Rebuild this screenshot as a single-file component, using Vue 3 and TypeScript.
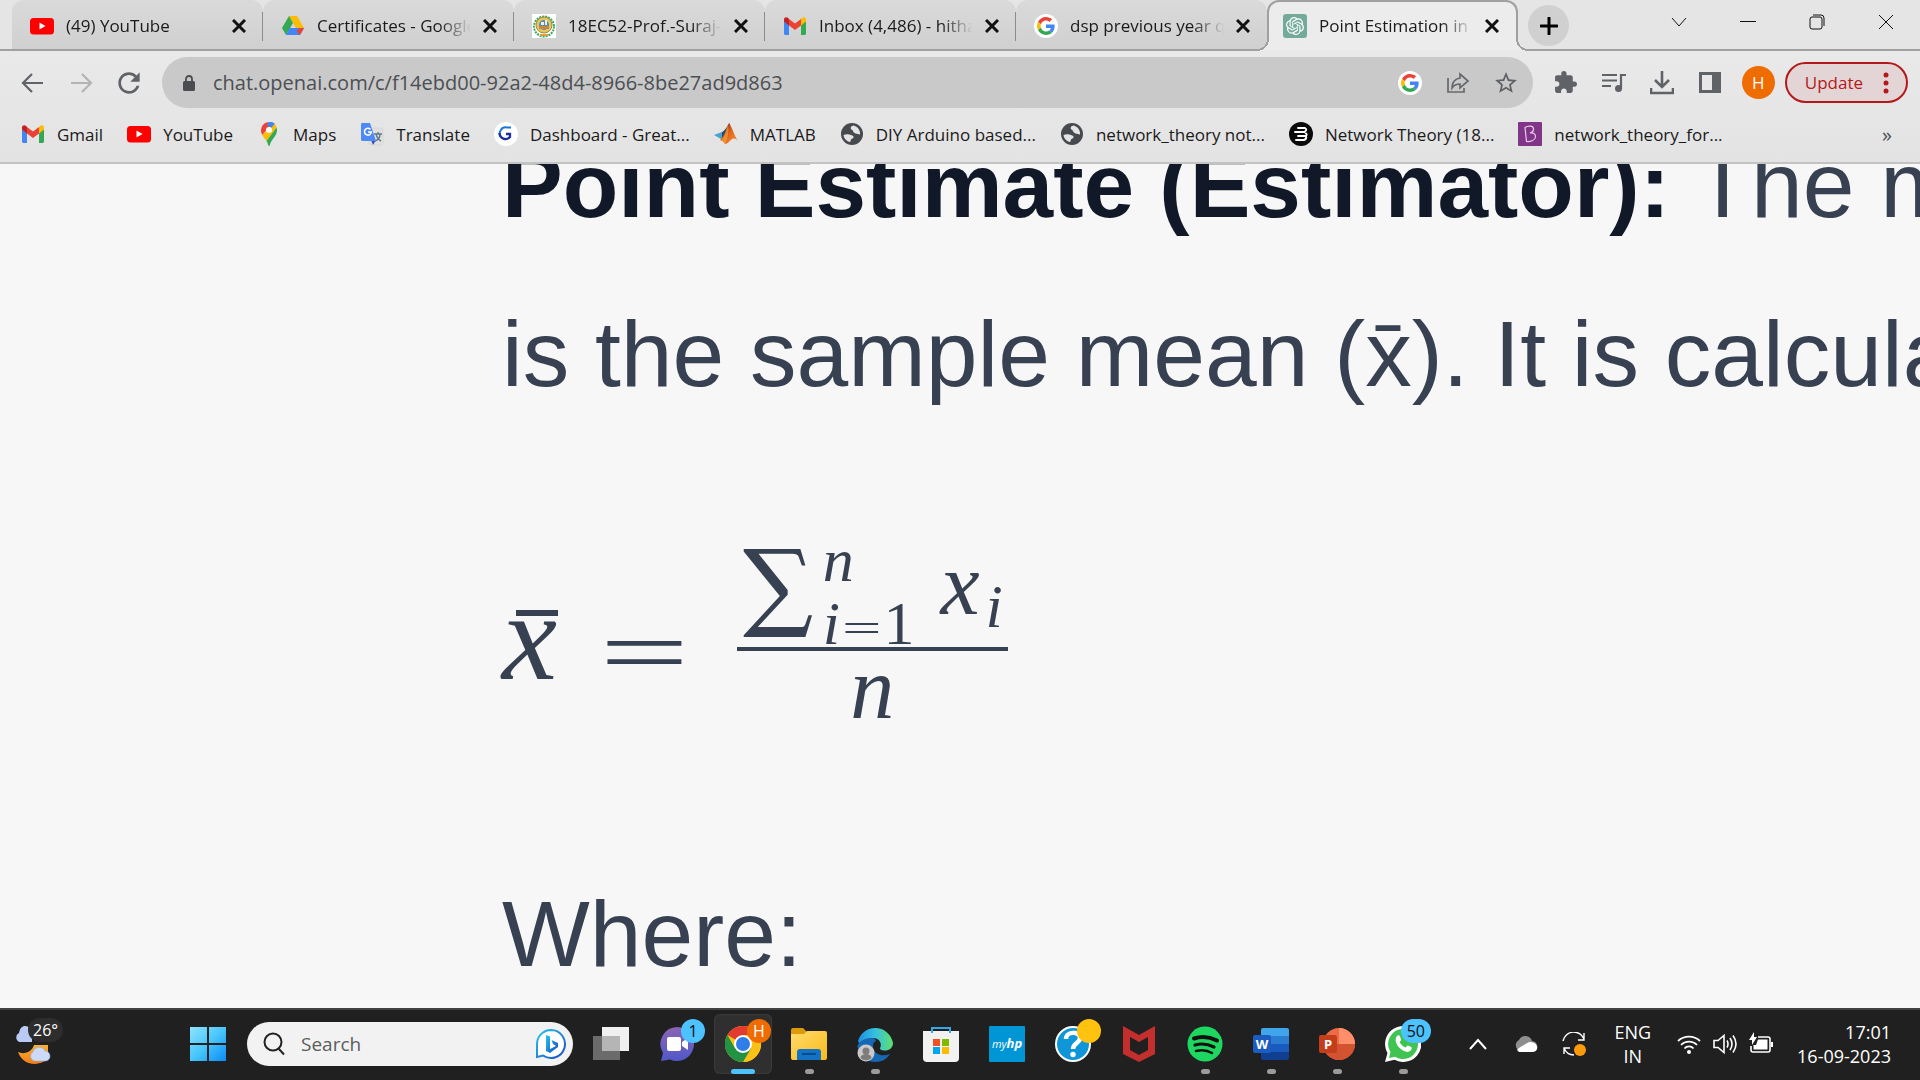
<script setup lang="ts">
interface Tab {
  icon: string
  title: string
  active?: boolean
}

interface Bookmark {
  icon: string
  label: string
}

interface PinnedApp {
  icon: string
  name: string
  letter?: string
  state?: 'open' | 'active'
  badge?: string
  badgeKind?: 'blue' | 'orange' | 'yellow'
}

const tabs: Tab[] = [
  { icon: 'youtube', title: '(49) YouTube' },
  { icon: 'drive', title: 'Certificates - Google' },
  { icon: 'crest', title: '18EC52-Prof.-Suraj-' },
  { icon: 'gmail', title: 'Inbox (4,486) - hitha' },
  { icon: 'google', title: 'dsp previous year qu' },
  { icon: 'openai', title: 'Point Estimation in S', active: true },
]

const bookmarks: Bookmark[] = [
  { icon: 'gmail', label: 'Gmail' },
  { icon: 'youtube', label: 'YouTube' },
  { icon: 'maps', label: 'Maps' },
  { icon: 'translate', label: 'Translate' },
  { icon: 'greatlearning', label: 'Dashboard - Great...' },
  { icon: 'matlab', label: 'MATLAB' },
  { icon: 'globe', label: 'DIY Arduino based...' },
  { icon: 'globe', label: 'network_theory not...' },
  { icon: 'stacked', label: 'Network Theory (18...' },
  { icon: 'byjus', label: 'network_theory_for...' },
]

const apps: PinnedApp[] = [
  { icon: 'taskview', name: 'Task view' },
  { icon: 'chat', name: 'Chat', badge: '1', badgeKind: 'blue' },
  { icon: 'chrome', name: 'Chrome', state: 'active', badge: 'H', badgeKind: 'orange' },
  { icon: 'explorer', name: 'File Explorer', state: 'open' },
  { icon: 'edge', name: 'Edge', state: 'open' },
  { icon: 'store', name: 'Microsoft Store' },
  { icon: 'myhp', name: 'myHP' },
  { icon: 'help', name: 'HP Support', badge: '', badgeKind: 'yellow' },
  { icon: 'mcafee', name: 'McAfee' },
  { icon: 'spotify', name: 'Spotify', state: 'open' },
  { icon: 'word', name: 'Word', letter: 'W', state: 'open' },
  { icon: 'powerpoint', name: 'PowerPoint', letter: 'P', state: 'open' },
  { icon: 'whatsapp', name: 'WhatsApp', state: 'open', badge: '50', badgeKind: 'blue' },
]

const url = 'chat.openai.com/c/f14ebd00-92a2-48d4-8966-8be27ad9d863'
</script>

<template>
  <div class="screen">
    <svg class="sprite" aria-hidden="true">
      <defs>
        <linearGradient id="g-win" x1="0" y1="0" x2="1" y2="1">
          <stop offset="0" stop-color="#8fe3ff" />
          <stop offset=".5" stop-color="#48c6fb" />
          <stop offset="1" stop-color="#0a8cf5" />
        </linearGradient>
        <linearGradient id="g-bing" x1="0" y1="0" x2="1" y2="1">
          <stop offset="0" stop-color="#22c7ee" />
          <stop offset="1" stop-color="#1b48c8" />
        </linearGradient>
        <linearGradient id="g-chat" x1="0" y1="0" x2="0" y2="1">
          <stop offset="0" stop-color="#8b63b4" />
          <stop offset="1" stop-color="#5059c9" />
        </linearGradient>
        <linearGradient id="g-folder" x1="0" y1="0" x2="1" y2="1">
          <stop offset="0" stop-color="#ffdc6b" />
          <stop offset="1" stop-color="#f9b91a" />
        </linearGradient>
        <linearGradient id="g-edge" x1="0" y1="0" x2="1" y2="0">
          <stop offset="0" stop-color="#1b8fe0" />
          <stop offset=".5" stop-color="#35c1e0" />
          <stop offset="1" stop-color="#5fe06a" />
        </linearGradient>
        <linearGradient id="g-moon" x1="0" y1="0" x2="0" y2="1">
          <stop offset="0" stop-color="#f9b233" />
          <stop offset="1" stop-color="#f07d1a" />
        </linearGradient>
        <linearGradient id="g-matlab" x1="0" y1="0" x2="1" y2="1">
          <stop offset="0" stop-color="#6d1f14" />
          <stop offset=".5" stop-color="#e2641c" />
          <stop offset="1" stop-color="#fb9a35" />
        </linearGradient>
      </defs>

      <symbol id="youtube" viewBox="0 0 24 24">
        <rect y="4" width="24" height="16.500" rx="3.500" fill="#f00" />
        <path d="M9.500 8.500v7l6-3.500z" fill="#fff" />
      </symbol>
      <symbol id="drive" viewBox="0 0 24 24">
        <path d="M8 2h8l7 12h-8z" fill="#fbbc04" />
        <path d="M8 2 1 14l4 7L12 9z" fill="#34a853" />
        <path d="M8.500 14H23l-4 7H5z" fill="#4285f4" />
        <path d="M19 14h4l-4 7-3.500-4z" fill="#ea4335" />
      </symbol>
      <symbol id="crest" viewBox="0 0 24 24">
        <path d="M0 0h24v24H0z" fill="#fff" />
        <circle cx="12" cy="12.500" r="10" fill="none" stroke="#3ba566" stroke-width="2" stroke-dasharray="2 1" />
        <circle cx="12" cy="11" r="8" fill="#e3c765" stroke="#a58a2e" />
        <circle cx="12" cy="11" r="5" fill="#5c8aa8" />
        <path d="M7 12h10v3H7z" fill="#c98545" />
        <path d="M9 8h3v3H9zM13 6h2v5h-2z" fill="#eee" />
        <path d="M8 20h8v2H8z" fill="#d9a23c" />
      </symbol>
      <symbol id="gmail" viewBox="0 0 24 24">
        <path d="M1 6v13.500c0 .8.700 1.500 1.500 1.500H6V10z" fill="#4285f4" />
        <path d="M18 21h3.500c.8 0 1.500-.7 1.500-1.500V6l-5 4z" fill="#34a853" />
        <path d="M18 5v6.500l5-4V5.500c0-2-2.200-3-3.800-1.700z" fill="#fbbc04" />
        <path d="M6 11.500V5l6 4.500L18 5v6.500L12 16z" fill="#ea4335" />
        <path d="M1 5.500v2l5 4V5L4.800 3.800C3.200 2.500 1 3.500 1 5.500z" fill="#c5221f" />
      </symbol>
      <symbol id="google" viewBox="0 0 24 24">
        <circle cx="12" cy="12" r="12" fill="#fff" />
        <g transform="translate(3 3) scale(.375)">
          <path fill="#EA4335" d="M24 9.500c3.540 0 6.710 1.220 9.210 3.600l6.850-6.850C35.900 2.380 30.470 0 24 0 14.620 0 6.510 5.380 2.560 13.220l7.980 6.190C12.430 13.720 17.740 9.500 24 9.500z" />
          <path fill="#4285F4" d="M46.980 24.550c0-1.570-.15-3.090-.38-4.550H24v9.020h12.940c-.58 2.960-2.260 5.480-4.780 7.180l7.730 6c4.510-4.180 7.090-10.360 7.090-17.650z" />
          <path fill="#FBBC05" d="M10.530 28.590c-.48-1.450-.76-2.990-.76-4.590s.27-3.140.76-4.590l-7.980-6.190C.92 16.460 0 20.120 0 24c0 3.880.92 7.540 2.560 10.780l7.970-6.190z" />
          <path fill="#34A853" d="M24 48c6.480 0 11.930-2.130 15.890-5.810l-7.730-6c-2.150 1.450-4.920 2.300-8.160 2.300-6.260 0-11.570-4.220-13.470-9.910l-7.980 6.190C6.510 42.620 14.620 48 24 48z" />
        </g>
      </symbol>
      <symbol id="openai" viewBox="0 0 24 24">
        <rect width="24" height="24" rx="3" fill="#74aa9c" />
        <g transform="translate(3 3) scale(.75)">
          <path fill="#fff" d="M22.2819 9.8211a5.9847 5.9847 0 0 0-.5157-4.9108 6.0462 6.0462 0 0 0-6.5098-2.9A6.0651 6.0651 0 0 0 4.9807 4.1818a5.9847 5.9847 0 0 0-3.9977 2.9 6.0462 6.0462 0 0 0 .7427 7.0966 5.98 5.98 0 0 0 .511 4.9107 6.051 6.051 0 0 0 6.5146 2.9001A5.9847 5.9847 0 0 0 13.2599 24a6.0557 6.0557 0 0 0 5.7718-4.2058 5.9894 5.9894 0 0 0 3.9977-2.9001 6.0557 6.0557 0 0 0-.7475-7.0729zm-9.022 12.6081a4.4755 4.4755 0 0 1-2.8764-1.0408l.1419-.0804 4.7783-2.7582a.7948.7948 0 0 0 .3927-.6813v-6.7369l2.02 1.1686a.071.071 0 0 1 .038.052v5.5826a4.504 4.504 0 0 1-4.4945 4.4944zm-9.6607-4.1254a4.4708 4.4708 0 0 1-.5346-3.0137l.142.0852 4.783 2.7582a.7712.7712 0 0 0 .7806 0l5.8428-3.3685v2.3324a.0804.0804 0 0 1-.0332.0615L9.74 19.9502a4.4992 4.4992 0 0 1-6.1408-1.6464zM2.3408 7.8956a4.485 4.485 0 0 1 2.3655-1.9728V11.6a.7664.7664 0 0 0 .3879.6765l5.8144 3.3543-2.0201 1.1685a.0757.0757 0 0 1-.071 0l-4.8303-2.7865A4.504 4.504 0 0 1 2.3408 7.872zm16.5963 3.8558L13.1038 8.364 15.1192 7.2a.0757.0757 0 0 1 .071 0l4.8303 2.7913a4.4944 4.4944 0 0 1-.6765 8.1042v-5.6772a.79.79 0 0 0-.407-.667zm2.0107-3.0231l-.142-.0852-4.7735-2.7818a.7759.7759 0 0 0-.7854 0L9.409 9.2297V6.8974a.0662.0662 0 0 1 .0284-.0615l4.8303-2.7866a4.4992 4.4992 0 0 1 6.6802 4.66zM8.3065 12.863l-2.02-1.1638a.0804.0804 0 0 1-.038-.0567V6.0742a4.4992 4.4992 0 0 1 7.3757-3.4537l-.142.0805L8.704 5.459a.7948.7948 0 0 0-.3927.6813zm1.0976-2.3654l2.602-1.4998 2.6069 1.4998v2.9994l-2.5974 1.4997-2.6067-1.4997Z" />
        </g>
      </symbol>
      <symbol id="maps" viewBox="0 0 24 24">
        <path d="M12 0a8 8 0 0 0-6.200 2.900L9 6.600z" fill="#ea4335" />
        <path d="M12 0 9 6.600 12 5l5.700-3.200A8 8 0 0 0 12 0z" fill="#4285f4" />
        <path d="M5.800 2.900A8 8 0 0 0 4 8c0 2 .5 3.500 1.300 5L14 3z" fill="#ea4335" />
        <path d="M5.300 13c1 2 2.700 4 4.200 6L19.500 5.500a8 8 0 0 0-1.800-3.700z" fill="#fbbc04" />
        <path d="M9.500 19c.9 1.300 1.500 3 1.700 4.200.2.900 1.400.9 1.600 0 .7-3 2.200-5 4.200-7.700 1.800-2.300 3-4.500 3-7.500a8 8 0 0 0-.5-2.500z" fill="#34a853" />
        <path d="M12 0a8 8 0 0 1 5.700 1.800L14 6l-4-3z" fill="#4285f4" />
        <circle cx="12" cy="8" r="3" fill="#fff" />
      </symbol>
      <symbol id="translate" viewBox="0 0 24 24">
        <rect x="9" y="6" width="14" height="17" rx="1.500" fill="#e0e0e0" stroke="#cfcfcf" stroke-width=".5" />
        <path d="M14 12h8M18 10v2M16 12c1 4 3 6 5 7M20 12c0 3-2 6-5 7" stroke="#607988" stroke-width="1.400" fill="none" />
        <path d="M11 18h5l-3 5z" fill="#3a4fb3" />
        <path d="M1.500 1H10l6 18H2.500A1.500 1.500 0 0 1 1 17.500v-15z" fill="#4e8af4" />
        <path d="M10.500 7.500A3.400 3.400 0 1 0 11.300 10H8" stroke="#fff" stroke-width="1.500" fill="none" />
      </symbol>
      <symbol id="greatlearning" viewBox="0 0 24 24">
        <circle cx="12" cy="12" r="12" fill="#fff" />
        <path d="M17 5.500h-4A6 6 0 0 0 7 15" stroke="#1a73d8" stroke-width="2" fill="none" />
        <path d="M5.500 11a6 6 0 0 0 10.500 4v-3h-4" stroke="#1c2f9c" stroke-width="2.300" fill="none" />
      </symbol>
      <symbol id="matlab" viewBox="0 0 24 24">
        <path d="M0 13 8 10l4 3-5 4z" fill="#4aa3cf" />
        <path d="M8 10c3-1 5-6 8-9l-3 12-5 3.500z" fill="#2b4c6e" />
        <path d="M15 1c3 4 5 12 9 18-3-3-5-3-7-1-2 1-3 4-6 4-1-2-2-3-5-4 5-4 6-12 9-17z" fill="url(#g-matlab)" />
        <path d="M14 3c1 6 0 13-3 19-1-2-2-3-4-4 4-3 5-10 7-15z" fill="#f9b43a" opacity=".55" />
      </symbol>
      <symbol id="globe" viewBox="0 0 24 24">
        <circle cx="12" cy="12" r="11" fill="#46494d" />
        <path d="M13.500 3.500c-2 .3-3 1.500-2.800 3 .3 1.500 2 1.200 2.300 2.500.2 1.500 1.500 1.700 2.500 2.500l4.500 1C20.500 8 17.500 4.500 13.500 3.500zM3.500 13c2-1 4.500-1 5.500-.5 1.500.5 4 .5 4.500 2s-1 2-2 2.500-.5 2-1.500 3C7 19.500 4 17 3.500 13z" fill="#e4e4e4" />
      </symbol>
      <symbol id="stacked" viewBox="0 0 24 24">
        <circle cx="12" cy="12" r="12" fill="#0a0a0a" />
        <path d="M9 6h7M6 10h9M9 14h8M7 18h8M16 6q3 2-1 4 4 2 2 4 1 3-2 4" stroke="#fff" stroke-width="1.900" fill="none" stroke-linecap="round" />
      </symbol>
      <symbol id="byjus" viewBox="0 0 24 24">
        <rect width="24" height="24" rx="1" fill="#813588" />
        <path d="M7 5.500c3-2 8-2 8.500 1 .3 2.500-2 4-3.500 4.500 3.500-.5 6 1 5.500 4-.5 3.500-5 5-9 4.500L7 5.500z" stroke="#e7cbe9" stroke-width="1.200" fill="none" />
      </symbol>

      <symbol id="taskview" viewBox="0 0 36 36">
        <path d="M9 1h27v24H9z" fill="#f0f0f0" />
        <path d="M0 10h27v24H0z" fill="#6b6b6b" />
        <path d="M9 10h18v15H9z" fill="#b5b5b5" />
      </symbol>
      <symbol id="chat" viewBox="0 0 36 36">
        <path d="M18 1a17 17 0 1 1-7 32.500L2 35l2-8A17 17 0 0 1 18 1z" fill="url(#g-chat)" />
        <rect x="8" y="11" width="14" height="14" rx="2" fill="#fff" />
        <path d="m23 16 6-4v12l-6-4z" fill="#fff" />
      </symbol>
      <symbol id="chrome" viewBox="0 0 36 36">
        <circle cx="18" cy="18" r="18" fill="#fbc116" />
        <path d="M18 18 2.400 9A18 18 0 0 1 33.600 9H18z" fill="#e33b2e" />
        <path d="M18 9h15.600A18 18 0 0 1 18 36l8-13z" fill="#fbc116" />
        <path d="M2.400 9A18 18 0 0 0 18 36l8-13.500L10.200 22.500z" fill="#229342" />
        <circle cx="18" cy="18" r="9" fill="#fff" />
        <circle cx="18" cy="18" r="7" fill="#2f7de8" />
      </symbol>
      <symbol id="explorer" viewBox="0 0 36 36">
        <path d="M0 4a2 2 0 0 1 2-2h10l4 4v6H0z" fill="#dd9a0c" />
        <path d="M0 8h13l3-3h18a2 2 0 0 1 2 2v25a2 2 0 0 1-2 2H2a2 2 0 0 1-2-2z" fill="url(#g-folder)" />
        <path d="M6 34V26a3 3 0 0 1 3-3h18a3 3 0 0 1 3 3v8z" fill="#1372c6" />
        <path d="M11 28h14" stroke="#0a4a8c" stroke-width="2" />
      </symbol>
      <symbol id="edge" viewBox="0 0 36 36">
        <path d="M1 15A18 18 0 0 1 36 17c0 5-4 7.500-8 7.500-4 0-6-1.500-4.500-3.500C25 17 22 12 16 12 9 12 5 16 5 22z" fill="url(#g-edge)" />
        <path d="M16 12C7 11 0 17 .500 21 2 31 10 36 18 36c7 0 12-3 15-8-7 3-17 1-17-8 0-3 1-4 3-5-1-2-2-3-3-3z" fill="#1667b4" />
        <circle cx="9" cy="27" r="8.500" fill="#c9c9c9" />
        <circle cx="9" cy="25" r="3.500" fill="#7f7b78" />
        <path d="M3.500 32a5.500 4 0 0 1 11 0 8 8 0 0 1-11 0z" fill="#7f7b78" />
      </symbol>
      <symbol id="store" viewBox="0 0 36 36">
        <path d="M0 5h36v27a4 4 0 0 1-4 4H4a4 4 0 0 1-4-4z" fill="#f2f2f2" />
        <path d="M9 7V2h18v5" stroke="#35a7e8" stroke-width="2" fill="none" />
        <path d="M10 13h7v7h-7z" fill="#f25022" />
        <path d="M19 13h7v7h-7z" fill="#7fba00" />
        <path d="M10 21h7v7h-7z" fill="#00a4ef" />
        <path d="M19 21h7v7h-7z" fill="#ffb900" />
      </symbol>
      <symbol id="myhp" viewBox="0 0 36 36">
        <rect width="36" height="36" rx="1" fill="#0096d6" />
      </symbol>
      <symbol id="help" viewBox="0 0 36 36">
        <circle cx="18" cy="18" r="17" fill="#0f96d8" stroke="#fff" stroke-width="2" />
        <path d="M11 13c0-8 14-8 14-1 0 5-7 5-7 11" stroke="#fff" stroke-width="4.500" fill="none" />
        <circle cx="18" cy="28.500" r="2.700" fill="#fff" />
      </symbol>
      <symbol id="mcafee" viewBox="0 0 36 36">
        <path d="M2 0 18 9 34 0v28l-16 8-16-8zM9 11v13l9 5 9-5V11l-9 5z" fill="#c22f2d" fill-rule="evenodd" />
      </symbol>
      <symbol id="spotify" viewBox="0 0 36 36">
        <circle cx="18" cy="18" r="17.500" fill="#1ed760" />
        <path d="M7 12.500c8-2.500 16-1.500 23 2" stroke="#111" stroke-width="4" fill="none" stroke-linecap="round" />
        <path d="M8 19c7-2 13-1 19 2" stroke="#111" stroke-width="3.200" fill="none" stroke-linecap="round" />
        <path d="M9 25c6-1.500 11-1 16 2" stroke="#111" stroke-width="2.600" fill="none" stroke-linecap="round" />
      </symbol>
      <symbol id="word" viewBox="0 0 36 36">
        <path d="M10 2h24a2 2 0 0 1 2 2v6H8V4a2 2 0 0 1 2-2z" fill="#41a5ee" />
        <path d="M8 10h28v8H8z" fill="#2b7cd3" />
        <path d="M8 18h28v8H8z" fill="#185abd" />
        <path d="M8 26h28v6a2 2 0 0 1-2 2H10a2 2 0 0 1-2-2z" fill="#103f91" />
        <rect y="9" width="18" height="18" rx="2" fill="#1c5cc0" />
      </symbol>
      <symbol id="powerpoint" viewBox="0 0 36 36">
        <circle cx="20" cy="18" r="16" fill="#ed6c47" />
        <path d="M20 2a16 16 0 0 1 16 16H20z" fill="#ff8f6b" />
        <path d="M4 18h32a16 16 0 0 1-32 0z" fill="#d35230" />
        <rect y="9" width="18" height="18" rx="2" fill="#c43e1c" />
      </symbol>
      <symbol id="whatsapp" viewBox="0 0 36 36">
        <path d="M18 0a18 18 0 1 1-8.500 33.700L0 36l2.500-9A18 18 0 0 1 18 0z" fill="#fff" />
        <path d="M18 3a15 15 0 1 1-8 27.700L4 32l1.500-6A15 15 0 0 1 18 3z" fill="#3fc351" />
        <path d="M12 10c1-1 2.500-1 3 .5l1.200 3c.2.8-1.700 2.300-1.500 2.800 1 2.200 3.300 4.300 5.600 5.200.7.200 1.900-2.200 2.700-1.900l3.200 1.500c1 .6.600 2.500-.5 3.500-3 2.700-7.500.8-11-2.500S9 13 12 10z" fill="#fff" />
      </symbol>
    </svg>

    <header class="browser">
      <nav class="tab-strip" aria-label="Tabs">
        <div v-for="tab in tabs" :key="tab.title" class="tab" :class="{ active: tab.active }">
          <svg class="favicon"><use :href="'#' + tab.icon" /></svg>
          <a class="tab-title" href="#">{{ tab.title }}</a>
          <button class="tab-close" type="button" aria-label="Close tab">
            <svg viewBox="0 0 14 14"><path d="m1 1 12 12M13 1 1 13" stroke="#111" stroke-width="3" /></svg>
          </button>
        </div>
        <button class="new-tab" type="button" aria-label="New tab">
          <svg viewBox="0 0 18 18"><path d="M9 1v16M1 9h16" stroke="#000" stroke-width="3" stroke-linecap="round" /></svg>
        </button>
        <div class="window-controls">
          <button type="button" aria-label="Search tabs">
            <svg viewBox="0 0 16 16"><path d="m1 4 7 8 7-8" /></svg>
          </button>
          <button type="button" aria-label="Minimize">
            <svg viewBox="0 0 16 16"><path d="M0 7.500h16" /></svg>
          </button>
          <button type="button" aria-label="Restore">
            <svg viewBox="0 0 16 16"><rect x="1" y="3" width="12" height="12" rx="2" /><path d="M4 1h8a3 3 0 0 1 3 3v8" /></svg>
          </button>
          <button type="button" aria-label="Close window">
            <svg viewBox="0 0 16 16"><path d="m1 1 14 14M15 1 1 15" /></svg>
          </button>
        </div>
      </nav>

      <div class="toolbar">
        <button class="tool" type="button" aria-label="Back">
          <svg viewBox="0 0 24 24"><path d="M22 12H3M11 3l-9 9 9 9" stroke="#5f6368" stroke-width="2.200" fill="none" /></svg>
        </button>
        <button class="tool" type="button" aria-label="Forward">
          <svg viewBox="0 0 24 24"><path d="M2 12h19M13 3l9 9-9 9" stroke="#b3b4b6" stroke-width="2.200" fill="none" /></svg>
        </button>
        <button class="tool" type="button" aria-label="Reload">
          <svg viewBox="3 3 18 18"><path fill="#5f6368" d="M17.650 6.350C16.200 4.900 14.210 4 12 4c-4.420 0-7.990 3.580-7.990 8s3.570 8 7.990 8c3.730 0 6.840-2.550 7.730-6h-2.080c-.82 2.330-3.040 4-5.650 4-3.310 0-6-2.690-6-6s2.690-6 6-6c1.660 0 3.140.69 4.220 1.780L13 11h7V4l-2.350 2.350z" /></svg>
        </button>
        <div class="omnibox">
          <svg class="lock" viewBox="0 0 14 18"><rect x="1" y="7" width="12" height="10" rx="1.500" fill="#4a4d51" /><path d="M4 8V5a3 3 0 0 1 6 0v3" fill="none" stroke="#4a4d51" stroke-width="1.800" /></svg>
          <input class="url" type="text" :value="url" aria-label="Address" />
          <button class="tool" type="button" aria-label="Google Lens"><svg><use href="#google" /></svg></button>
          <button class="tool" type="button" aria-label="Share">
            <svg viewBox="0 0 24 24"><path d="M2 7v14h16v-4M14 3l8 7-8 7v-4c-4 0-6 1-8 4 0-6 3-9 8-10z" stroke="#65686c" stroke-width="1.700" fill="none" /></svg>
          </button>
          <button class="tool" type="button" aria-label="Bookmark">
            <svg viewBox="1 1 22 22"><path fill="#5f6368" d="M22 9.240l-7.190-.62L12 2 9.190 8.630 2 9.240l5.460 4.730L5.820 21 12 17.270 18.180 21l-1.630-7.030L22 9.240zM12 15.400l-3.760 2.270 1-4.280-3.320-2.880 4.380-.38L12 6.100l1.710 4.040 4.380.38-3.320 2.880 1 4.280L12 15.400z" /></svg>
          </button>
        </div>
        <div class="extensions">
          <button class="tool" type="button" aria-label="Extensions">
            <svg viewBox="1 1 23 23"><path fill="#5f6368" d="M20.500 11H19V7c0-1.100-.9-2-2-2h-4V3.500a2.500 2.500 0 0 0-5 0V5H4c-1.100 0-2 .9-2 2v3.800h1.500c1.500 0 2.700 1.200 2.700 2.700S5 16.200 3.500 16.200H2V20c0 1.100.9 2 2 2h3.800v-1.500c0-1.500 1.200-2.700 2.700-2.700s2.700 1.200 2.700 2.700V22H17c1.100 0 2-.9 2-2v-4h1.500a2.500 2.500 0 0 0 0-5z" /></svg>
          </button>
          <button class="tool" type="button" aria-label="Media controls">
            <svg viewBox="0 0 24 24"><path d="M0 4h15M0 9.500h15M0 15h9" stroke="#5f6368" stroke-width="2" /><path d="M18 4h6M19 3v15" stroke="#5f6368" stroke-width="2.200" /><circle cx="16.500" cy="17.500" r="3.500" fill="#5f6368" /></svg>
          </button>
          <button class="tool" type="button" aria-label="Downloads">
            <svg viewBox="0 0 24 24"><path d="M12 0v15M5 9l7 7 7-7M1 17v5h22v-5" stroke="#5f6368" stroke-width="2.600" fill="none" /></svg>
          </button>
          <button class="tool" type="button" aria-label="Side panel">
            <svg viewBox="0 0 24 24"><path d="M1 1h22v21H1zM4 4v15h10V4z" fill="#5f6368" fill-rule="evenodd" /></svg>
          </button>
          <button class="avatar" type="button" aria-label="Profile">H</button>
          <button class="update" type="button">
            Update
            <svg viewBox="0 0 6 22"><circle cx="3" cy="3" r="2.500" /><circle cx="3" cy="11" r="2.500" /><circle cx="3" cy="19" r="2.500" /></svg>
          </button>
        </div>
      </div>

      <nav class="bookmarks" aria-label="Bookmarks">
        <a v-for="mark in bookmarks" :key="mark.label" class="bookmark" href="#">
          <svg class="favicon"><use :href="'#' + mark.icon" /></svg>
          <span>{{ mark.label }}</span>
        </a>
        <button class="more" type="button" aria-label="More bookmarks">»</button>
      </nav>
    </header>

    <main class="page">
      <p class="prose">
        <strong>Point Estimate (Estimator):</strong> The most<br />is the sample mean (x̄). It is calculated
      </p>
      <div class="formula">
        <i class="mean">x</i>
        <span class="equals">=</span>
        <div class="fraction">
          <div class="numerator">
            <span class="sum">∑</span>
            <div class="limits">
              <i>n</i>
              <span><i>i</i><span class="small-equals">=</span>1</span>
            </div>
            <i class="term">x</i>
            <i class="index">i</i>
          </div>
          <i class="denominator">n</i>
        </div>
      </div>
      <p class="prose">Where:</p>
    </main>

    <footer class="taskbar">
      <button class="weather" type="button" aria-label="Weather">
        <svg viewBox="0 0 48 52">
          <path d="M4 24a5 5 0 0 1 0-9c1-5 3-7 6-7 4 0 6 3 7 7v9z" fill="#b9cbf5" />
          <path d="M3 34c6 3 14 0 16-7h14v12c-3 8-24 12-30-5z" fill="url(#g-moon)" />
          <path d="M19 43a5 5 0 0 1-1-9c1-5 9-7 12-1 6 0 7 9 1 10z" fill="#ccd9f8" stroke="#8fa8e3" stroke-width=".5" />
        </svg>
        <span>26°</span>
      </button>

      <button class="start" type="button" aria-label="Start">
        <svg viewBox="0 0 36 36"><path d="M0 1h17v16H0zM19 1h17v16H19zM0 19h17v16H0zM19 19h17v16H19z" fill="url(#g-win)" /></svg>
      </button>
      <div class="search">
        <svg class="glass" viewBox="0 0 24 24"><circle cx="11" cy="10" r="8.500" /><path d="m16.500 16.500 5.500 6" /></svg>
        <input type="text" placeholder="Search" aria-label="Search" />
        <svg class="bing" viewBox="0 0 32 32">
          <path d="M16 2a14 14 0 1 1-8 25.500L2 29V16A14 14 0 0 1 16 2z" fill="#fff" stroke="url(#g-bing)" stroke-width="2" />
          <path d="m11 7 4 1.500V21l6-3-3-2-1.500-4L23 15v4L15 25l-4-2z" fill="url(#g-bing)" />
        </svg>
      </div>

      <button v-for="app in apps" :key="app.name" class="app" :class="app.state" type="button" :aria-label="app.name">
        <svg class="app-icon"><use :href="'#' + app.icon" /></svg>
        <span v-if="app.letter" class="letter">{{ app.letter }}</span>
        <span v-if="app.icon === 'myhp'" class="wordmark">my<b>hp</b></span>
        <span v-if="app.badgeKind" class="badge" :class="app.badgeKind">{{ app.badge }}</span>
      </button>

      <div class="tray">
        <button type="button" aria-label="Show hidden icons">
          <svg viewBox="0 0 24 24"><path d="m4 17 8-9 8 9" stroke="#fff" stroke-width="2" fill="none" /></svg>
        </button>
        <button type="button" aria-label="OneDrive">
          <svg viewBox="0 0 24 24"><path d="M6 19a6 6 0 0 1-1-11 7 7 0 0 1 13 1c7 1 7 10 1 10z" fill="#8e8e8e" /><path d="M3 18c2-3 9-6 12-8 9-1 11 9 4 10H5z" fill="#fff" /></svg>
        </button>
        <button type="button" aria-label="Update available">
          <svg viewBox="0 0 24 24"><path d="M1 9A11 11 0 0 1 22 7M22 1v7h-6M12 23A11 11 0 0 1 2 16M2 22v-6h6" stroke="#fff" stroke-width="1.400" fill="none" /><circle cx="18" cy="18" r="6" fill="#fb9b0b" /></svg>
        </button>
        <button class="language" type="button">ENG<br />IN</button>
        <button class="status" type="button" aria-label="Network, volume and battery">
          <svg viewBox="0 0 24 24"><path d="M1 9a16 16 0 0 1 22 0M4 13a11 11 0 0 1 16 0M7.500 16.500a6 6 0 0 1 9 0" stroke="#fff" stroke-width="1.800" fill="none" /><circle cx="12" cy="20" r="2" fill="#fff" /></svg>
          <svg viewBox="0 0 24 24"><path d="M1 8.500h4l6-5v17l-6-5H1zM14 8.500q2 3.500 0 7M17 6q4 6 0 12M20 3.500q6 8.500 0 17" stroke="#fff" stroke-width="1.600" fill="none" /></svg>
          <svg viewBox="0 0 24 24"><path d="M9 5h10a2 2 0 0 1 2 2v11a2 2 0 0 1-2 2H4a2 2 0 0 1-2-2v-4" stroke="#fff" stroke-width="1.600" fill="none" /><path d="M9 7.500h9.500v10H4.500V13H7zM22 10h2v5h-2zM5 0v5h3l-5 8V8H0z" fill="#fff" /></svg>
        </button>
        <button class="clock" type="button">17:01<br />16-09-2023</button>
      </div>
    </footer>
  </div>
</template>

<style>
body {
  background: #f7f7f7;
}
</style>

<style scoped>
.screen {
  display: flex;
  flex-direction: column;
  height: 100vh;
  overflow: hidden;
  font-family: "Open Sans", "Noto Sans", sans-serif;
  color: #1a1a1a;
}

.sprite {
  position: absolute;
  width: 0;
  height: 0;
}

svg {
  display: block;
  flex: none;
}

button {
  padding: 0;
  border: 0;
  background: none;
  font: inherit;
  color: inherit;
}

a {
  color: inherit;
  text-decoration: none;
}

.favicon {
  width: 24px;
  height: 24px;
}

/* Browser frame */
.browser {
  flex: none;
  height: 162px;
  border-bottom: 2px solid #c3c3c3;
  background: linear-gradient(#ececec, #e3e3e3);
}

.tab-strip {
  display: flex;
  height: 51px;
  padding-left: 12px;
  background: #e5e5e5;
  box-shadow: inset 0 -2px #a0a0a0;
}

.tab {
  display: flex;
  flex: 0 1 251px;
  align-items: center;
  gap: 12px;
  box-sizing: border-box;
  min-width: 0;
  height: 49px;
  padding: 2px 17px 0 18px;
  border-radius: 12px 12px 0 0;
  background:
    linear-gradient(#8c8c8c, #8c8c8c) right 12px / 1px 29px no-repeat,
    linear-gradient(#dadada, #d0d0d0);
  font-size: 17px;
}

.tab:nth-child(5) {
  background: linear-gradient(#dadada, #d0d0d0);
}

.tab.active {
  position: relative;
  height: 51px;
  padding: 0 17px 2px 14px;
  border: 2px solid #a0a0a0;
  border-bottom: 0;
  background: #ececec;
}

.tab.active::before,
.tab.active::after {
  content: "";
  position: absolute;
  bottom: 0;
  width: 12px;
  height: 12px;
}

.tab.active::before {
  right: 100%;
  background: radial-gradient(circle at 0 0, transparent 10px, #a0a0a0 10px 12px, #ececec 12px);
}

.tab.active::after {
  left: 100%;
  background: radial-gradient(circle at 100% 0, transparent 10px, #a0a0a0 10px 12px, #ececec 12px);
}

.tab-title {
  flex: 1;
  overflow: hidden;
  white-space: nowrap;
  mask-image: linear-gradient(90deg, #000 calc(100% - 32px), transparent);
}

.tab-close svg {
  width: 14px;
  height: 14px;
}

.new-tab {
  display: grid;
  place-items: center;
  width: 41px;
  height: 41px;
  margin: 5px 0 0 10px;
  border-radius: 50%;
  background: #d0d0d0;
}

.new-tab svg {
  width: 18px;
}

.window-controls {
  display: flex;
  margin-left: auto;
}

.window-controls button {
  display: grid;
  place-items: center;
  width: 69px;
  height: 44px;
}

.window-controls svg {
  width: 16px;
  height: 16px;
  fill: none;
  stroke: #111;
  stroke-width: 1;
}

.toolbar {
  display: flex;
  align-items: center;
  height: 63px;
  padding: 0 12px 0 9px;
}

.tool {
  display: grid;
  place-items: center;
  width: 48px;
  height: 48px;
}

.tool svg {
  width: 24px;
  height: 24px;
}

.omnibox {
  display: flex;
  flex: 1;
  align-items: center;
  height: 51px;
  margin-left: 9px;
  padding: 0 3px 0 20px;
  border-radius: 26px;
  background: #c9c9c9;
}

.lock {
  width: 14px;
  height: 18px;
}

.url {
  flex: 1;
  min-width: 0;
  margin-left: 17px;
  padding: 0;
  border: 0;
  outline: 0;
  background: none;
  font: inherit;
  font-size: 20px;
  color: #4c4f53;
}

.extensions {
  display: flex;
  align-items: center;
  margin-left: 9px;
}

.avatar {
  width: 33px;
  height: 33px;
  margin: 0 10px 0 8px;
  border-radius: 50%;
  background: #ef6c00;
  font-size: 17px;
  color: #fff;
}

.update {
  display: flex;
  align-items: center;
  gap: 20px;
  box-sizing: border-box;
  height: 41px;
  padding: 0 17px 0 18px;
  border: 2px solid #b3191b;
  border-radius: 21px;
  background: #e3d5d5;
  font-size: 17px;
  color: #b3191b;
}

.update svg {
  width: 6px;
  height: 22px;
  fill: #b3191b;
}

.bookmarks {
  display: flex;
  align-items: center;
  gap: 24px;
  height: 40px;
  padding: 0 28px 0 21px;
  font-size: 17px;
}

.bookmark {
  display: flex;
  align-items: center;
  gap: 12px;
  white-space: nowrap;
}

.more {
  margin-left: auto;
  font-size: 20px;
  color: #4c4f53;
}

/* Page */
.page {
  flex: 1;
  min-height: 0;
  overflow: hidden;
  padding-left: 502px;
  background: #f7f7f7;
  color: #374151;
}

.prose {
  margin: 0;
  font: 93px/168px "Liberation Sans", sans-serif;
  white-space: nowrap;
}

.prose:first-child {
  margin-top: -63px;
}

.prose strong {
  font-size: 91px;
  color: #111827;
}

.formula {
  display: flex;
  align-items: flex-start;
  height: 309px;
  margin-top: 103px;
  font-family: "Liberation Serif", serif;
  line-height: 1;
}

.mean {
  position: relative;
  margin-top: 35px;
  font-size: 124px;
}

.mean::before {
  content: "";
  position: absolute;
  top: 34px;
  left: 14px;
  width: 42px;
  height: 6px;
  background: #374151;
}

.equals,
.small-equals {
  font-family: "DejaVu Sans", sans-serif;
  font-weight: 200;
}

.equals {
  margin: 48px 0 0 38px;
  font-size: 118px;
}

.small-equals {
  font-size: 52px;
}

.fraction {
  display: flex;
  flex-direction: column;
  align-items: center;
  margin-left: 43px;
}

.numerator {
  display: flex;
  align-items: flex-start;
  box-sizing: border-box;
  height: 110px;
  padding-right: 5px;
  border-bottom: 4px solid #374151;
}

.sum {
  margin-top: 8px;
  font-family: "DejaVu Math TeX Gyre", "DejaVu Serif", serif;
  font-size: 84px;
}

.limits {
  display: flex;
  flex-direction: column;
  margin: -12px 26px 0 4px;
  font-size: 62px;
  line-height: 63px;
}

.term {
  font-size: 88px;
}

.index {
  margin: 34px 0 0 6px;
  font-size: 62px;
}

.denominator {
  font-size: 88px;
  line-height: 76px;
}

/* Taskbar */
.taskbar {
  display: flex;
  flex: none;
  align-items: center;
  box-sizing: border-box;
  height: 72px;
  padding-bottom: 2px;
  border-top: 2px solid #414141;
  background: #202020;
  color: #fff;
}

.weather {
  position: relative;
  width: 48px;
  margin: 0 127px 0 15px;
}

.weather svg {
  width: 48px;
  height: 52px;
}

.weather span {
  position: absolute;
  top: 0;
  left: 13px;
  padding: 2px 5px;
  border-radius: 12px;
  background: #2d2d2d;
  font-size: 16px;
  line-height: 20px;
}

.start svg {
  width: 36px;
  height: 36px;
}

.search {
  display: flex;
  align-items: center;
  box-sizing: border-box;
  width: 326px;
  height: 44px;
  margin: 0 5px 0 21px;
  padding: 0 6px 0 15px;
  border-radius: 22px;
  background: #f2f2f2;
}

.glass {
  width: 24px;
  height: 24px;
  fill: none;
  stroke: #222;
  stroke-width: 2;
}

.search input {
  flex: 1;
  min-width: 0;
  margin-left: 15px;
  padding: 0;
  border: 0;
  background: none;
  font: inherit;
  font-size: 19px;
}

.search input::placeholder {
  color: #5c5c5c;
  opacity: 1;
}

.bing {
  width: 32px;
  height: 32px;
}

.app {
  position: relative;
  display: grid;
  place-items: center;
  width: 58px;
  height: 60px;
  margin: 0 4px;
  border-radius: 6px;
}

.app-icon {
  width: 36px;
  height: 36px;
}

.app.active {
  background: #2f2f2f;
  box-shadow: inset 0 0 0 1px #3a3a3a;
}

.app.open::after,
.app.active::after {
  content: "";
  position: absolute;
  bottom: 0;
  left: 50%;
  width: 9px;
  height: 5px;
  margin-left: -4px;
  border-radius: 3px;
  background: #9b9b9b;
}

.app.active::after {
  width: 24px;
  margin-left: -12px;
  background: #4cc2ff;
}

.letter {
  position: absolute;
  top: 21px;
  left: 11px;
  width: 18px;
  font-size: 13px;
  font-weight: 700;
  line-height: 18px;
  text-align: center;
}

.wordmark {
  position: absolute;
  top: 20px;
  left: 11px;
  width: 36px;
  font-size: 11px;
  font-style: italic;
  line-height: 18px;
  text-align: center;
}

.wordmark b {
  font-size: 13px;
}

.badge {
  position: absolute;
  top: 5px;
  right: 1px;
  box-sizing: border-box;
  min-width: 24px;
  height: 24px;
  padding: 0 6px;
  border-radius: 12px;
  background: #4cc2ff;
  font-size: 16px;
  line-height: 24px;
  color: #111;
}

.badge.orange {
  background: #ef6c00;
  color: #fff;
}

.badge.yellow {
  background: #ffc20e;
}

.tray {
  display: flex;
  align-items: center;
  margin-left: auto;
  padding-right: 29px;
  font-size: 18px;
  line-height: 24px;
}

.tray svg {
  width: 24px;
  height: 24px;
  margin: 0 12px;
}

.language {
  margin: 0 20px 0 16px;
}

.status {
  display: flex;
}

.status svg {
  margin: 0 6px;
}

.clock {
  margin-left: 18px;
  text-align: right;
}
</style>
